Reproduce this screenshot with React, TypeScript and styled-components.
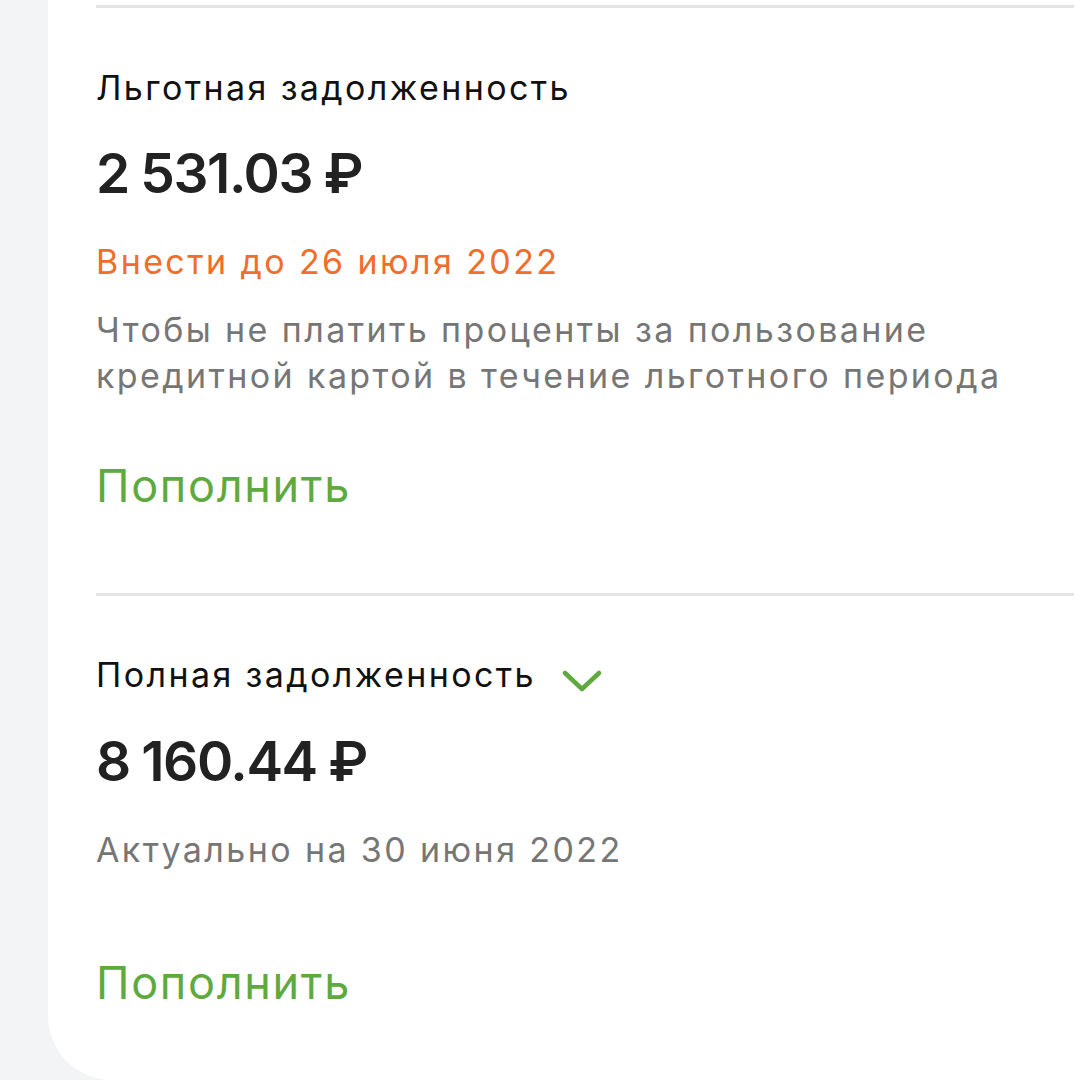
import React from "react";
import styled, { createGlobalStyle } from "styled-components";

const Global = createGlobalStyle`
  html, body { margin: 0; padding: 0; background: #f3f4f6; }
  body { font-family: Inter, "Noto Sans", sans-serif; -webkit-font-smoothing: antialiased; }
`;

const Page = styled.div`
  width: 1089px;
  height: 1080px;
  overflow: hidden;
  background: #f3f4f6;
  display: flex;
`;

const Card = styled.div`
  margin-left: 48px;
  flex: 1;
  height: 1080px;
  background: #ffffff;
  border-bottom-left-radius: 64px;
  padding: 5px 15px 0 48px;
  box-sizing: border-box;
  display: flex;
  flex-direction: column;
`;

const Divider = styled.div<{ $mt: number }>`
  height: 3px;
  background: #e4e4e4;
  margin-top: ${(p) => p.$mt}px;
  flex-shrink: 0;
`;

const Label = styled.div<{ $mt: number }>`
  margin-top: ${(p) => p.$mt}px;
  display: flex;
  align-items: center;
  gap: 26px;
  font-size: 34px;
  line-height: 40px;
  color: #111111;
  letter-spacing: 2.4px;
`;

const ChevronBox = styled.span`
  display: flex;
  margin-top: 12px;
`;

const Amount = styled.div<{ $mt: number }>`
  margin-top: ${(p) => p.$mt}px;
  font-size: 55px;
  line-height: 64px;
  font-weight: 600;
  color: #222222;
  letter-spacing: -1.4px;
  word-spacing: -1px;
`;

const Note = styled.div<{ $mt: number; $tone: "orange" | "gray" }>`
  margin-top: ${(p) => p.$mt}px;
  font-size: 34px;
  line-height: 46px;
  color: ${(p) => (p.$tone === "orange" ? "#f26d2c" : "#767676")};
  letter-spacing: 2.4px;
`;

const Action = styled.button<{ $mt: number }>`
  margin-top: ${(p) => p.$mt}px;
  align-self: flex-start;
  padding: 0;
  border: none;
  background: none;
  font-family: inherit;
  font-size: 45px;
  line-height: 52px;
  color: #5faa3e;
  letter-spacing: 1.7px;
  cursor: pointer;
`;

const Chevron = () => (
  <ChevronBox>
    <svg width="40" height="24" viewBox="0 0 40 24" fill="none">
      <path d="M3 4 L20 20 L37 4" stroke="#5faa3e" strokeWidth="4.5" strokeLinecap="round" strokeLinejoin="round" />
    </svg>
  </ChevronBox>
);

export default function App() {
  return (
    <>
      <Global />
      <Page>
        <Card>
          <Divider $mt={0} />
          <Label $mt={60}>Льготная задолженность</Label>
          <Amount $mt={33}>2 531.03 ₽</Amount>
          <Note $mt={34} $tone="orange">Внести до 26 июля 2022</Note>
          <Note $mt={22} $tone="gray">
            Чтобы не платить проценты за пользование
            <br />
            кредитной картой в течение льготного периода
          </Note>
          <Action $mt={61}>Пополнить</Action>
          <Divider $mt={81} />
          <Label $mt={59}>
            Полная задолженность
            <Chevron />
          </Label>
          <Amount $mt={34}>8 160.44 ₽</Amount>
          <Note $mt={34} $tone="gray">Актуально на 30 июня 2022</Note>
          <Action $mt={84}>Пополнить</Action>
        </Card>
      </Page>
    </>
  );
}
